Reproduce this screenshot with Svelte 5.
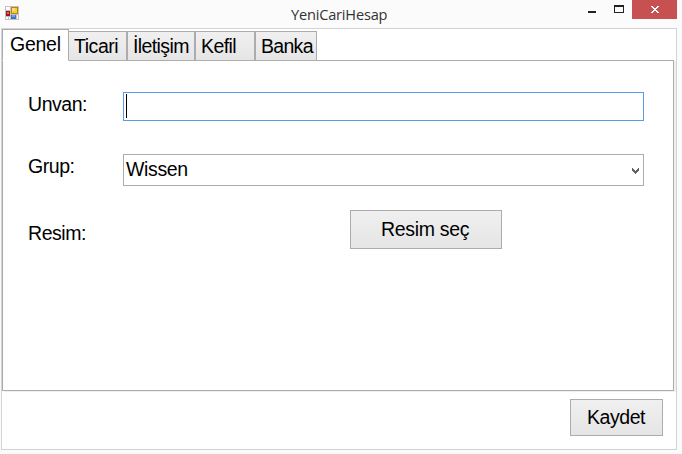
<script>
  const tabs = [
    { name: 'Genel', cls: 'genel' },
    { name: 'Ticari', cls: 'ticari' },
    { name: 'İletişim', cls: 'iletisim' },
    { name: 'Kefil', cls: 'kefil' },
    { name: 'Banka', cls: 'banka' }
  ];
  let active = $state('Genel');
</script>

<div class="window">
  <header>
    <svg class="app-icon" width="14" height="14" viewBox="0 0 14 14" shape-rendering="crispEdges">
      <rect width="14" height="14" fill="#c1c1c1" />
      <path d="M1 1h4v3h-4zM1 11h2v2h-2zM4 11h1v2h-1zM12 9h1v4h-1z" fill="#fff" />
      <rect x="1" y="5" width="4" height="5" fill="#a31616" />
      <rect x="2" y="6" width="2" height="2" fill="#e4685c" />
      <rect x="6" y="1" width="7" height="7" fill="#b8860b" />
      <rect x="7" y="2" width="5" height="5" fill="#ffc832" />
      <rect x="7" y="2" width="3" height="3" fill="#ffe07a" />
      <rect x="6" y="9" width="5" height="4" fill="#3b73c8" />
      <rect x="7" y="9" width="3" height="2" fill="#6fa2ea" />
    </svg>
    <h1>YeniCariHesap</h1>
    <div class="controls">
      <svg width="44" height="19" viewBox="0 0 44 19" shape-rendering="crispEdges">
        <rect x="0" y="11" width="8" height="2" fill="#222" />
        <path d="M26 5h10v8h-10zM27 7v5h8v-5z" fill="#222" fill-rule="evenodd" />
      </svg>
      <button class="close" aria-label="Kapat">
        <svg width="8" height="7" viewBox="0 0 8 7" shape-rendering="crispEdges">
          <path d="M0 0h2v1h1v1h2v-1h1v-1h2v1h-1v1h-1v1h-1v1h1v1h1v1h1v1h-2v-1h-1v-1h-2v1h-1v1h-2v-1h1v-1h1v-1h1v-1h-1v-1h-1v-1h-1z" fill="#fff" />
        </svg>
      </button>
    </div>
  </header>

  <main>
    <nav>
      {#each tabs as tab}
        <button class="tab {tab.cls}" class:active={active === tab.name} onclick={() => (active = tab.name)}><span>{tab.name}</span></button>
      {/each}
    </nav>
    <section>
      <div class="row unvan">
        <label for="unvan">Unvan:</label>
        <div class="field text" id="unvan"><i class="caret"></i></div>
      </div>
      <div class="row grup">
        <label for="grup">Grup:</label>
        <div class="field combo" id="grup">
          <span>Wissen</span>
          <svg width="7" height="6" viewBox="0 0 7 6" shape-rendering="crispEdges">
            <path d="M0 0h1v1h1v1h1v1h1v-1h1v-1h1v-1h1v3h-1v1h-1v1h-1v1h-1v-1h-1v-1h-1v-1h-1z" fill="#606060" />
          </svg>
        </div>
      </div>
      <div class="row resim">
        <span class="label">Resim:</span>
        <button class="push choose"><span>Resim seç</span></button>
      </div>
    </section>
    <footer>
      <button class="push save"><span>Kaydet</span></button>
    </footer>
  </main>
</div>

<style>
  :global(body) { margin: 0; }
  .window {
    width: 682px;
    height: 454px;
    box-sizing: border-box;
    background: #fbfbfb;
    padding-left: 1px;
    overflow: hidden;
    color: #000;
    font: 19.5px/22px "Liberation Sans", Arial, sans-serif;
    letter-spacing: -0.45px;
  }
  button { font: inherit; color: inherit; letter-spacing: inherit; padding: 0; margin: 0; border-radius: 0; box-sizing: border-box; }
  header { height: 28px; display: flex; align-items: flex-start; }
  .app-icon { margin: 6px 0 0 4px; flex: none; }
  h1 {
    margin: 4px 0 0 272px;
    width: 100px;
    font: 14.6px/20px "Open Sans", "Noto Sans", sans-serif;
    letter-spacing: -0.2px;
    color: #333;
    white-space: nowrap;
  }
  .controls { display: flex; margin-left: auto; margin-right: 5px; }
  .close {
    width: 45px;
    height: 19px;
    border: 0;
    background: #c75050;
    display: flex;
    justify-content: center;
    align-items: center;
  }
  main {
    width: 676px;
    height: 422px;
    box-sizing: border-box;
    border: 1px solid #d3d3d3;
    background: #fff;
  }
  nav { display: flex; height: 32px; align-items: flex-end; position: relative; }
  .tab {
    height: 30px;
    border: 1px solid #acacac;
    background: linear-gradient(#f0f0f0, #e5e5e5);
    text-align: left;
    white-space: nowrap;
    padding: 0 0 1px 5px;
    line-height: 22px;
  }
  .tab span, .push span, .combo span, .label, label { display: block; white-space: nowrap; }
  .tab.active { height: 32px; background: #fff; border-bottom-color: #fff; padding: 0 0 3px 7px; }
  .genel { width: 67px; letter-spacing: -0.25px; }
  .ticari { width: 58px; border-left: 0; }
  .iletisim { width: 68px; letter-spacing: -0.6px; }
  .kefil { width: 60px; letter-spacing: -0.6px; }
  .banka { width: 62px; letter-spacing: -0.7px; }
  section {
    height: 331px;
    width: 672px;
    box-sizing: border-box;
    margin-top: -1px;
    border: 1px solid #acacac;
    padding: 31px 0 0 25px;
    box-shadow: 2px 1px 0 #f0f0f0;
  }
  .row { display: flex; }
  .row label, .label { width: 95px; flex: none; }
  .row label { padding-top: 1px; }
  .field { width: 521px; box-sizing: border-box; border: 1px solid #acacac; display: flex; }
  .text { height: 29px; border-color: #569de5; }
  .caret { width: 1px; height: 24px; margin: 1px 0 0 2px; background: #000; }
  .grup { margin-top: 33px; }
  .combo { height: 32px; align-items: center; justify-content: space-between; padding: 0 4px 0 2px; }
  .combo span { letter-spacing: -0.35px; padding-bottom: 2px; }
  .combo svg { margin-top: 2px; }
  .resim { margin-top: 24px; }
  .label { padding-top: 12px; }
  .push { border: 1px solid #acacac; background: linear-gradient(#f0f0f0, #e5e5e5); text-align: left; padding-bottom: 2px; }
  .choose { width: 152px; height: 39px; margin-left: 227px; padding-left: 30px; letter-spacing: -0.3px; }
  footer { display: flex; justify-content: flex-end; padding: 8px 13px 0 0; }
  .save { width: 93px; height: 37px; padding-left: 16px; }
</style>
